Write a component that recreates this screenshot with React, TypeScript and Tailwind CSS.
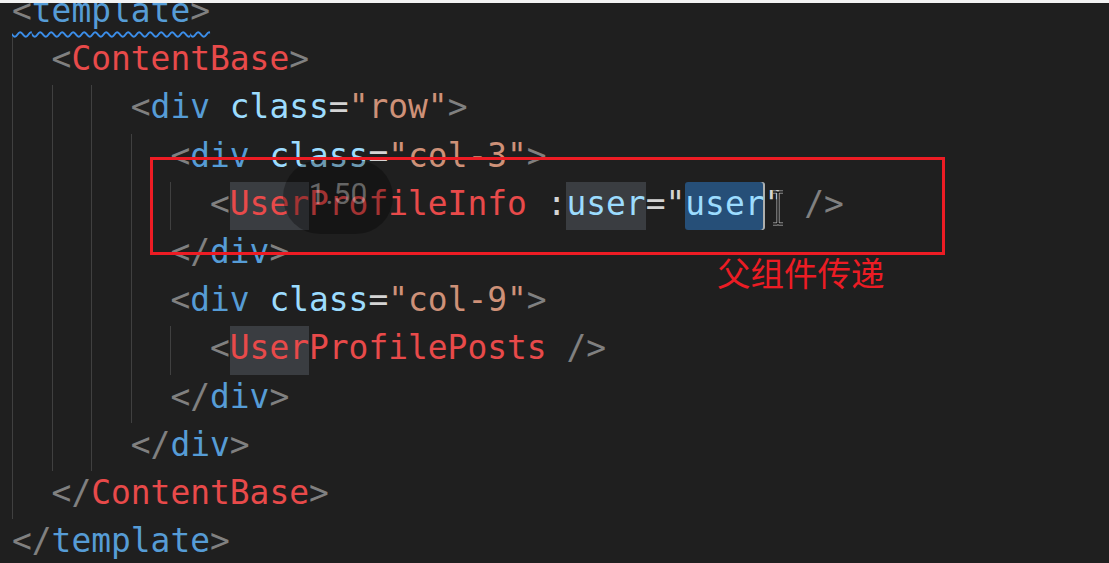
import React from "react";

type Tok = { t: string; c: string; hl?: "word" | "sel" };
type Line = { indent: number; guides: number[]; toks: Tok[]; wavy?: boolean };

const P = "text-[#808080]";
const T = "text-[#569cd6]";
const C = "text-[#e84a4a]";
const A = "text-[#9cdcfe]";
const S = "text-[#ce9178]";
const W = "text-[#d4d4d4]";

const open = (name: string, cls: string): Tok[] => [
  { t: "<", c: P },
  { t: name, c: cls },
  { t: ">", c: P },
];
const close = (name: string, cls: string): Tok[] => [
  { t: "</", c: P },
  { t: name, c: cls },
  { t: ">", c: P },
];
const divClass = (v: string): Tok[] => [
  { t: "<", c: P },
  { t: "div", c: T },
  { t: " ", c: W },
  { t: "class", c: A },
  { t: "=", c: W },
  { t: `"${v}"`, c: S },
  { t: ">", c: P },
];

const LINES: Line[] = [
  { indent: 0, guides: [], toks: open("template", T), wavy: true },
  { indent: 2, guides: [0], toks: open("ContentBase", C) },
  { indent: 6, guides: [0, 2, 4], toks: divClass("row") },
  { indent: 8, guides: [0, 2, 4, 6], toks: divClass("col-3") },
  {
    indent: 10,
    guides: [0, 2, 4, 6, 8],
    toks: [
      { t: "<", c: P },
      { t: "User", c: C, hl: "word" },
      { t: "ProfileInfo", c: C },
      { t: " ", c: W },
      { t: ":", c: W },
      { t: "user", c: A, hl: "word" },
      { t: "=", c: W },
      { t: '"', c: W },
      { t: "user", c: A, hl: "sel" },
      { t: '"', c: W },
      { t: " ", c: W },
      { t: "/>", c: P },
    ],
  },
  { indent: 8, guides: [0, 2, 4, 6], toks: close("div", T) },
  { indent: 8, guides: [0, 2, 4, 6], toks: divClass("col-9") },
  {
    indent: 10,
    guides: [0, 2, 4, 6, 8],
    toks: [
      { t: "<", c: P },
      { t: "User", c: C, hl: "word" },
      { t: "ProfilePosts", c: C },
      { t: " ", c: W },
      { t: "/>", c: P },
    ],
  },
  { indent: 8, guides: [0, 2, 4, 6], toks: close("div", T) },
  { indent: 6, guides: [0, 2, 4], toks: close("div", T) },
  { indent: 2, guides: [0], toks: close("ContentBase", C) },
  { indent: 0, guides: [], toks: close("template", T) },
];

function Token({ tok }: { tok: Tok }) {
  const hl =
    tok.hl === "word"
      ? "bg-[#3a3d41]"
      : tok.hl === "sel"
        ? "bg-[#264f78] rounded-[3px] shadow-[inset_-2px_0_0_#aeafad]"
        : "";
  return <span className={`${tok.c} ${hl}`}>{tok.t}</span>;
}

function CodeLine({ line }: { line: Line }) {
  const cells = [];
  for (let c = 0; c < line.indent; c += 2) {
    cells.push(
      <span
        key={c}
        className={`w-[2ch] shrink-0 ${line.guides.includes(c) ? "border-l border-[#404040]" : ""}`}
      />
    );
  }
  const toks = line.toks.map((tok, i) => <Token key={i} tok={tok} />);
  return (
    <div className="flex h-[48.2px] whitespace-pre">
      {cells}
      {line.wavy ? (
        <span className="underline decoration-wavy decoration-[#3b8eea] decoration-[1.5px] underline-offset-[9px]">
          {toks}
        </span>
      ) : (
        toks
      )}
    </div>
  );
}

export default function App() {
  return (
    <div className="relative h-[563px] w-[1109px] overflow-hidden bg-[#1f1f1f]">
      <div className="-mt-[11px] pl-[12px] font-['DejaVu_Sans_Mono',monospace] text-[32.9px] leading-[44px]">
        {LINES.map((line, i) => (
          <CodeLine key={i} line={line} />
        ))}
      </div>

      {/* mouse text cursor */}
      <svg
        className="absolute left-[770px] top-[190px]"
        width="16"
        height="36"
        viewBox="0 0 16 36"
      >
        <path
          d="M3 2h4l1 1 1-1h4M8 3v30M3 34h4l1-1 1 1h4"
          fill="none"
          stroke="#bdbdbd"
          strokeWidth="3"
        />
        <path
          d="M3 2h4l1 1 1-1h4M8 3v30M3 34h4l1-1 1 1h4"
          fill="none"
          stroke="#111"
          strokeWidth="1.5"
        />
      </svg>

      {/* playback speed overlay */}
      <div className="absolute left-[283px] top-[160px] flex h-[74px] w-[110px] items-center justify-center rounded-full bg-black/30">
        <span className="-mt-[6px] font-['Roboto',sans-serif] text-[30px] leading-none text-white/35">
          1.50
        </span>
      </div>

      {/* annotation */}
      <div className="absolute left-[150px] top-[157px] h-[98px] w-[795px] border-[3px] border-[#ec1c24]" />
      <div className="absolute left-[717px] top-[255px] font-['Noto_Sans_CJK_SC',sans-serif] text-[33.5px] leading-none text-[#ec1c24]">
        父组件传递
      </div>

      <div className="absolute inset-x-0 top-0 h-[3px] bg-[#f2f2f2]" />
    </div>
  );
}
